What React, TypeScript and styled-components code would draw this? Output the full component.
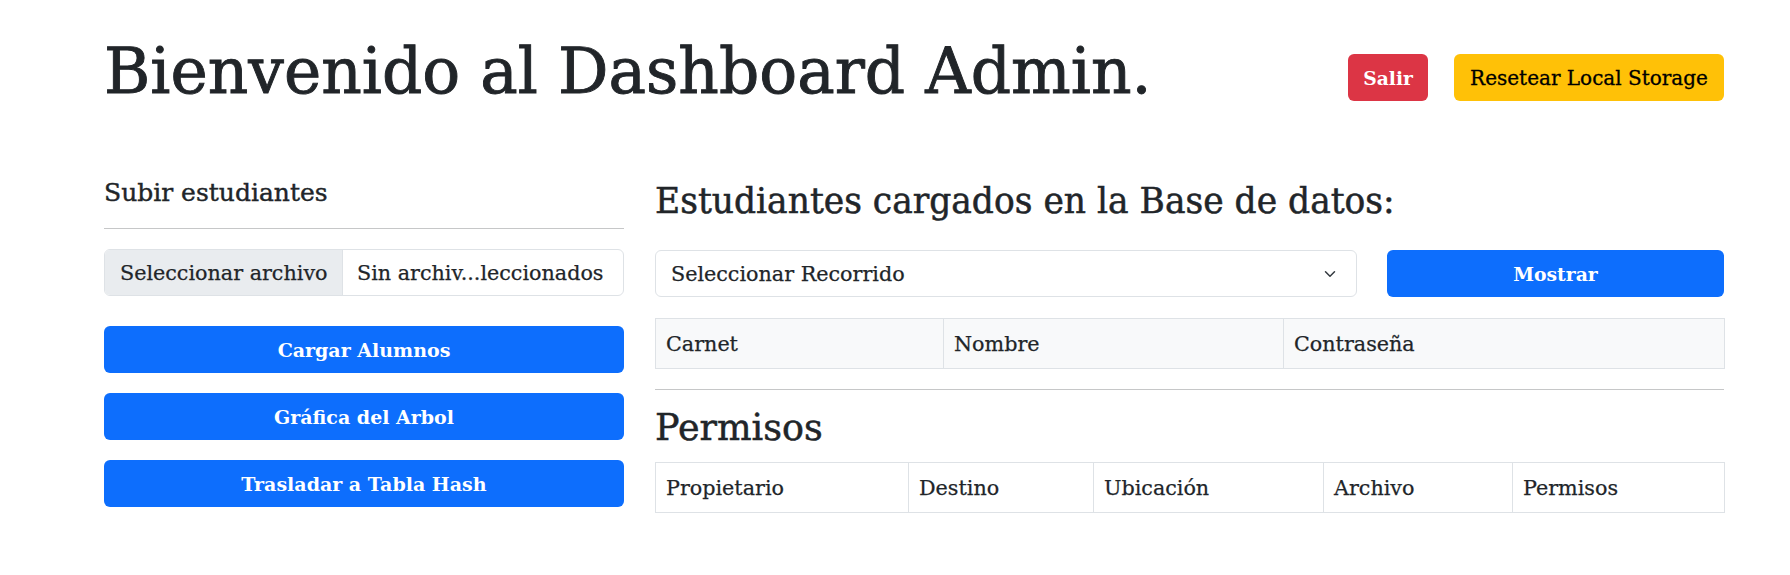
import React from "react";
import styled, { createGlobalStyle } from "styled-components";

const GlobalStyle = createGlobalStyle`
  html, body { margin: 0; padding: 0; background: #fff; }
  body {
    font-family: "DejaVu Serif", "Liberation Serif", serif;
    color: #212529;
    font-size: 20.7px;
    -webkit-text-stroke: 0.25px #212529;
  }
  * { box-sizing: border-box; }
`;

const Page = styled.div`
  width: 1620px;
  margin-left: 104px;
  display: flex;
  flex-direction: column;
`;

const Header = styled.header`
  height: 150px;
  padding-top: 40px;
  display: flex;
  align-items: flex-start;
  justify-content: space-between;
`;

const Title = styled.h1`
  margin: 0;
  font-size: 63px;
  font-weight: 400;
  line-height: 1;
  white-space: nowrap;
  -webkit-text-stroke: 0.9px #212529;
`;

const HeaderActions = styled.div`
  display: flex;
  gap: 26px;
  padding-top: 14px;
`;

type Variant = "primary" | "danger" | "warning";

const Btn = styled.button<{ $variant: Variant; $w?: number; $bold?: boolean; $size?: number }>`
  height: 47px;
  width: ${(p) => (p.$w ? `${p.$w}px` : "100%")};
  border: 1px solid transparent;
  border-radius: 6px;
  font-family: inherit;
  font-size: ${(p) => p.$size ?? 19}px;
  font-weight: ${(p) => (p.$bold ? 700 : 400)};
  background: ${(p) =>
    p.$variant === "primary" ? "#0d6efd" : p.$variant === "danger" ? "#dc3545" : "#ffc107"};
  color: ${(p) => (p.$variant === "warning" ? "#000" : "#fff")};
  -webkit-text-stroke: ${(p) => (p.$variant === "warning" ? "0.3px #000" : "0")};
  display: flex;
  align-items: center;
  justify-content: center;
  padding: 0 12px;
  white-space: nowrap;
  cursor: pointer;
`;

const Main = styled.main`
  display: flex;
  gap: 31px;
  align-items: flex-start;
`;

const LeftCol = styled.section`
  width: 520px;
  display: flex;
  flex-direction: column;
`;

const RightCol = styled.section`
  width: 1069px;
  display: flex;
  flex-direction: column;
`;

const SmallHeading = styled.h5`
  margin: 28px 0 0;
  font-size: 25px;
  font-weight: 400;
  line-height: 1.2;
  -webkit-text-stroke: 0.4px #212529;
`;

const Rule = styled.hr<{ $top: number; $bottom: number }>`
  border: 0;
  border-top: 1px solid #c6c7c8;
  margin: ${(p) => p.$top}px 0 ${(p) => p.$bottom}px;
  width: 100%;
`;

const FileInput = styled.div`
  height: 47px;
  display: flex;
  border: 1px solid #dee2e6;
  border-radius: 6px;
  overflow: hidden;
  margin-bottom: 30px;
`;

const FileButton = styled.div`
  width: 238px;
  background: #e9ecef;
  border-right: 1px solid #dee2e6;
  display: flex;
  align-items: center;
  padding-left: 15px;
  white-space: nowrap;
`;

const FileName = styled.div`
  flex: 1;
  display: flex;
  align-items: center;
  padding-left: 14px;
  white-space: nowrap;
  overflow: hidden;
`;

const ButtonStack = styled.div`
  display: flex;
  flex-direction: column;
  gap: 20px;
`;

const SectionHeading = styled.h3<{ $size: number; $top: number; $bottom: number }>`
  margin: ${(p) => p.$top}px 0 ${(p) => p.$bottom}px;
  font-size: ${(p) => p.$size}px;
  font-weight: 400;
  line-height: 1.2;
  white-space: nowrap;
  -webkit-text-stroke: 0.5px #212529;
`;

const ControlRow = styled.div`
  display: flex;
  gap: 30px;
  margin-bottom: 21px;
`;

const SelectBox = styled.div`
  width: 702px;
  height: 47px;
  border: 1px solid #dee2e6;
  border-radius: 6px;
  display: flex;
  align-items: center;
  justify-content: space-between;
  padding: 0 18px 0 15px;
  white-space: nowrap;
`;

const Table = styled.table<{ $head: string }>`
  width: 100%;
  border-collapse: collapse;
  table-layout: fixed;
  th {
    height: 50px;
    border: 1px solid #dee2e6;
    background: ${(p) => p.$head};
    text-align: left;
    font-weight: 400;
    padding: 0 10px;
    font-size: 20.7px;
    white-space: nowrap;
  }
`;

const cols1 = [288, 340, 441];
const cols2 = [253, 185, 230, 189, 212];

const Chevron = () => (
  <svg width="16" height="12" viewBox="0 0 16 16" fill="none">
    <path d="m2 5 6 6 6-6" stroke="#343a40" strokeWidth="2" strokeLinecap="round" strokeLinejoin="round" />
  </svg>
);

export default function App() {
  return (
    <>
      <GlobalStyle />
      <Page>
        <Header>
          <Title>Bienvenido al Dashboard Admin.</Title>
          <HeaderActions>
            <Btn $variant="danger" $w={80} $bold $size={18.7}>Salir</Btn>
            <Btn $variant="warning" $w={270} $size={20}>Resetear Local Storage</Btn>
          </HeaderActions>
        </Header>
        <Main>
          <LeftCol>
            <SmallHeading>Subir estudiantes</SmallHeading>
            <Rule $top={20} $bottom={20} />
            <FileInput>
              <FileButton>Seleccionar archivo</FileButton>
              <FileName>Sin archiv...leccionados</FileName>
            </FileInput>
            <ButtonStack>
              <Btn $variant="primary" $bold>Cargar Alumnos</Btn>
              <Btn $variant="primary" $bold>Gráfica del Arbol</Btn>
              <Btn $variant="primary" $bold>Trasladar a Tabla Hash</Btn>
            </ButtonStack>
          </LeftCol>
          <RightCol>
            <SectionHeading $size={34.5} $top={31} $bottom={28}>
              Estudiantes cargados en la Base de datos:
            </SectionHeading>
            <ControlRow>
              <SelectBox>
                <span>Seleccionar Recorrido</span>
                <Chevron />
              </SelectBox>
              <Btn $variant="primary" $w={337} $bold $size={18.8}>Mostrar</Btn>
            </ControlRow>
            <Table $head="#f8f9fa">
              <colgroup>
                {cols1.map((w, i) => <col key={i} style={{ width: w }} />)}
              </colgroup>
              <thead>
                <tr><th>Carnet</th><th>Nombre</th><th>Contraseña</th></tr>
              </thead>
            </Table>
            <Rule $top={20} $bottom={0} />
            <SectionHeading $size={36.5} $top={16} $bottom={12}>Permisos</SectionHeading>
            <Table $head="#fff">
              <colgroup>
                {cols2.map((w, i) => <col key={i} style={{ width: w }} />)}
              </colgroup>
              <thead>
                <tr><th>Propietario</th><th>Destino</th><th>Ubicación</th><th>Archivo</th><th>Permisos</th></tr>
              </thead>
            </Table>
          </RightCol>
        </Main>
      </Page>
    </>
  );
}
